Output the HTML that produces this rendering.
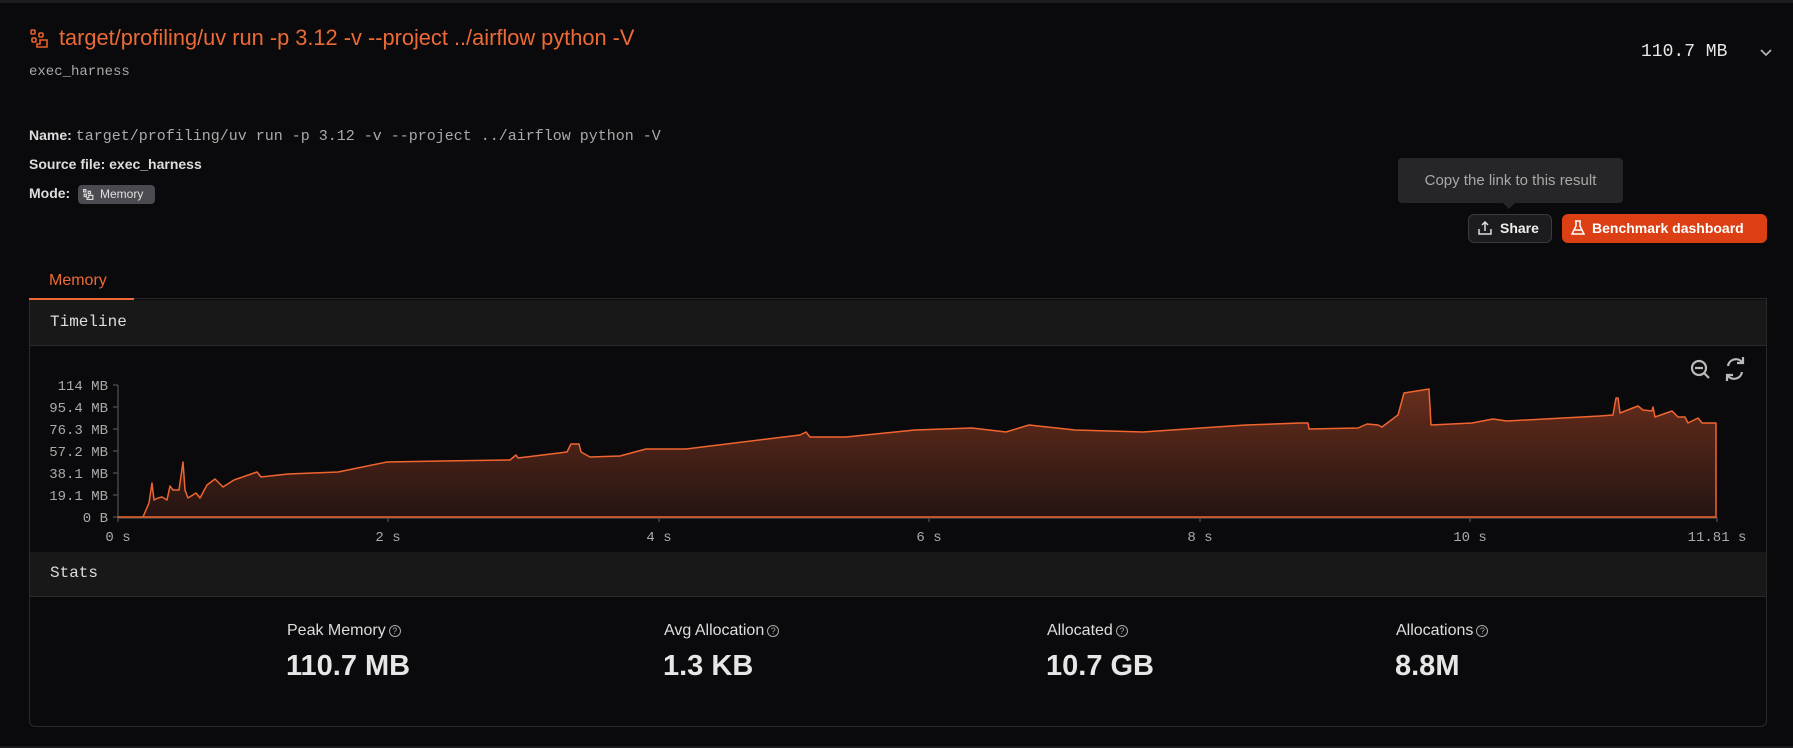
<!DOCTYPE html>
<html><head><meta charset="utf-8"><style>
*{margin:0;padding:0;box-sizing:border-box}
body{width:1793px;height:748px;background:#0a0a0c;font-family:"Liberation Sans",sans-serif;position:relative;overflow:hidden;color:#ddd}
.a{position:absolute;white-space:nowrap}
.mono{font-family:"Liberation Mono",monospace}
.q{display:inline-block;width:12px;height:12px;border:1px solid #aaa;border-radius:50%;font-size:9px;line-height:10px;text-align:center;color:#aaa;vertical-align:1px;margin-left:3px}
</style></head><body>
<div class="a" style="left:0;top:0;width:1793px;height:3px;background:#1c1c1f"></div>
<svg class="a" style="left:30px;top:29px" width="19" height="19" viewBox="0 0 19 19" fill="none" stroke="#e8602c" stroke-width="1.6"><rect x="1" y="1" width="4" height="4" rx="1"/><rect x="9" y="4" width="4" height="4" rx="1"/><rect x="2" y="9" width="4" height="4" rx="1"/><path d="M10 11h7v7H7v-3h3z"/></svg>
<div class="a" style="left:59px;top:25px;font-size:21.8px;color:#ec6a35;line-height:26px">target/profiling/uv run -p 3.12 -v --project ../airflow python -V</div>
<div class="a mono" style="left:29px;top:64px;font-size:14px;color:#aaa">exec_harness</div>
<div class="a" style="left:29px;top:126px;font-size:14px;line-height:18px"><b style="color:#ddd">Name:</b> <span class="mono" style="color:#aaa;font-size:15px">target/profiling/uv run -p 3.12 -v --project ../airflow python -V</span></div>
<div class="a" style="left:29px;top:155px;font-size:14px;line-height:18px;font-weight:bold;color:#ddd">Source file: exec_harness</div>
<div class="a" style="left:29px;top:184px;font-size:14px;line-height:18px;font-weight:bold;color:#ddd">Mode:</div>
<div class="a" style="left:78px;top:185px;width:77px;height:19px;background:#4a4a50;border-radius:4px;font-size:12px;color:#e0e0e0;line-height:19px;padding-left:22px">Memory</div>
<svg class="a" style="left:83px;top:189px" width="11" height="11" viewBox="0 0 19 19" fill="none" stroke="#ddd" stroke-width="2"><rect x="1" y="1" width="4" height="4"/><rect x="9" y="4" width="4" height="4"/><rect x="2" y="9" width="4" height="4"/><path d="M10 11h7v7H7v-3h3z"/></svg>

<div class="a mono" style="left:1641px;top:42px;font-size:18px;color:#e6e6e6">110.7 MB</div>
<svg class="a" style="left:1759px;top:48px" width="14" height="9" viewBox="0 0 14 9"><path d="M2 2l5 5 5-5" stroke="#bbb" stroke-width="1.6" fill="none"/></svg>

<div class="a" style="left:1398px;top:158px;width:225px;height:45px;background:#262629;border-radius:4px;color:#a8a8a8;font-size:15px;line-height:45px;text-align:center">Copy the link to this result</div>
<div class="a" style="left:1502px;top:202px;width:0;height:0;border-left:7px solid transparent;border-right:7px solid transparent;border-top:7px solid #262629"></div>
<div class="a" style="left:1468px;top:214px;width:84px;height:29px;background:#1c1c1f;border:1px solid #3a3a3e;border-radius:6px;color:#eee;font-size:14px;font-weight:bold;line-height:27px;padding-left:31px">Share</div>
<svg class="a" style="left:1478px;top:221px" width="14" height="14" viewBox="0 0 14 14" fill="none" stroke="#ddd" stroke-width="1.5"><path d="M7 10V1M4 4l3-3 3 3M1 8v5h12V8"/></svg>
<div class="a" style="left:1562px;top:214px;width:205px;height:29px;background:#dc3f14;border-radius:6px;color:#fff;font-size:14px;font-weight:bold;line-height:29px;padding-left:30px">Benchmark dashboard</div>
<svg class="a" style="left:1571px;top:220px" width="14" height="16" viewBox="0 0 14 16" fill="none" stroke="#fff" stroke-width="1.5"><path d="M4 1h6M5 1v5L1 14h12L9 6V1M3 10h8"/></svg>

<div class="a" style="left:49px;top:272px;font-size:16px;color:#ec6a35">Memory</div>
<div class="a" style="left:29px;top:298px;width:1738px;height:429px;border:1px solid #2a2a2c;border-radius:0 0 6px 6px;background:#0a0a0c"></div>
<div class="a" style="left:29px;top:298px;width:105px;height:2px;background:#ec6a35"></div>
<div class="a" style="left:30px;top:300px;width:1736px;height:46px;background:#181818;border-bottom:1px solid #2a2a2c"></div>
<div class="a mono" style="left:50px;top:313px;font-size:16px;color:#ddd">Timeline</div>
<div class="a" style="left:30px;top:552px;width:1736px;height:45px;background:#181818;border-bottom:1px solid #2a2a2c"></div>
<div class="a mono" style="left:50px;top:564px;font-size:16px;color:#ddd">Stats</div>

<svg class="a" style="left:0;top:0" width="1793" height="748">
<defs><linearGradient id="g" x1="0" y1="385" x2="0" y2="517" gradientUnits="userSpaceOnUse"><stop offset="0" stop-color="#6a2e1c"/><stop offset="1" stop-color="#241412"/></linearGradient></defs>
<g font-family="Liberation Mono,monospace" font-size="14" fill="#aaa" text-anchor="end">
<text x="108" y="390">114 MB</text><text x="108" y="412">95.4 MB</text><text x="108" y="434">76.3 MB</text><text x="108" y="456">57.2 MB</text><text x="108" y="478">38.1 MB</text><text x="108" y="500">19.1 MB</text><text x="108" y="522">0 B</text>
</g>
<g font-family="Liberation Mono,monospace" font-size="14" fill="#aaa" text-anchor="middle">
<text x="118" y="541">0 s</text><text x="388" y="541">2 s</text><text x="659" y="541">4 s</text><text x="929" y="541">6 s</text><text x="1200" y="541">8 s</text><text x="1470" y="541">10 s</text><text x="1717" y="541">11.81 s</text>
</g>
<g stroke="#444" stroke-width="1.5" fill="none"><path d="M118 385V518H1717"/><path d="M113 385h5M113 407h5M113 429h5M113 451h5M113 473h5M113 495h5M113 517h5M388 517v5M659 517v5M929 517v5M1200 517v5M1470 517v5M1717 517v5M118 517v5"/></g>
<path fill="url(#g)" stroke="#f0652f" stroke-width="1.5" stroke-linejoin="round" d="M118 517L143 517L149 503L152 483L154 500L158 498L162 497L167 500L170 486L173 490L179 490L183 462L185 490L188 498L196 493L200 498L207 485L215 479L223 487L234 480L257 472L261 477L288 474L338 472L387 462L441 461L510 460L516 455L518 458L567 452L571 444L579 444L581 452L590 457L620 456L646 449L686 449L800 435L806 432L810 437L846 437L915 430L972 428L1006 432L1029 425L1075 430L1143 432L1201 428L1246 425L1300 423L1308 423L1309 429L1358 428L1367 424L1378 425L1382 427L1398 415L1404 393L1429 389L1431 425L1472 423L1493 419L1507 421L1600 416L1613 415L1616 398L1618 398L1620 413L1638 406L1643 410L1652 411L1653 407L1655 417L1672 411L1678 417L1685 417L1688 423L1698 418L1702 423L1716 423L1716 517Z"/>
<g fill="none" stroke="#bbb" stroke-width="2.2"><circle cx="1699" cy="368" r="7"/><path d="M1695 368h8M1704 373l5 5"/>
<path d="M1728 366a8 8 0 0 1 14-4M1742 372a8 8 0 0 1-14 4"/><path d="M1743 357v6h-6M1727 381v-6h6"/></g>
</svg>

<div class="a" style="left:287px;top:622px;font-size:16px;color:#ddd">Peak Memory<span class="q">?</span></div>
<div class="a" style="left:286px;top:650px;font-size:29px;font-weight:bold;color:#e6e6e6">110.7 MB</div>
<div class="a" style="left:664px;top:622px;font-size:16px;color:#ddd">Avg Allocation<span class="q">?</span></div>
<div class="a" style="left:663px;top:650px;font-size:29px;font-weight:bold;color:#e6e6e6">1.3 KB</div>
<div class="a" style="left:1047px;top:622px;font-size:16px;color:#ddd">Allocated<span class="q">?</span></div>
<div class="a" style="left:1046px;top:650px;font-size:29px;font-weight:bold;color:#e6e6e6">10.7 GB</div>
<div class="a" style="left:1396px;top:622px;font-size:16px;color:#ddd">Allocations<span class="q">?</span></div>
<div class="a" style="left:1395px;top:650px;font-size:29px;font-weight:bold;color:#e6e6e6">8.8M</div>
<div class="a" style="left:0;top:746px;width:1793px;height:2px;background:#1c1c1f"></div>
</body></html>
